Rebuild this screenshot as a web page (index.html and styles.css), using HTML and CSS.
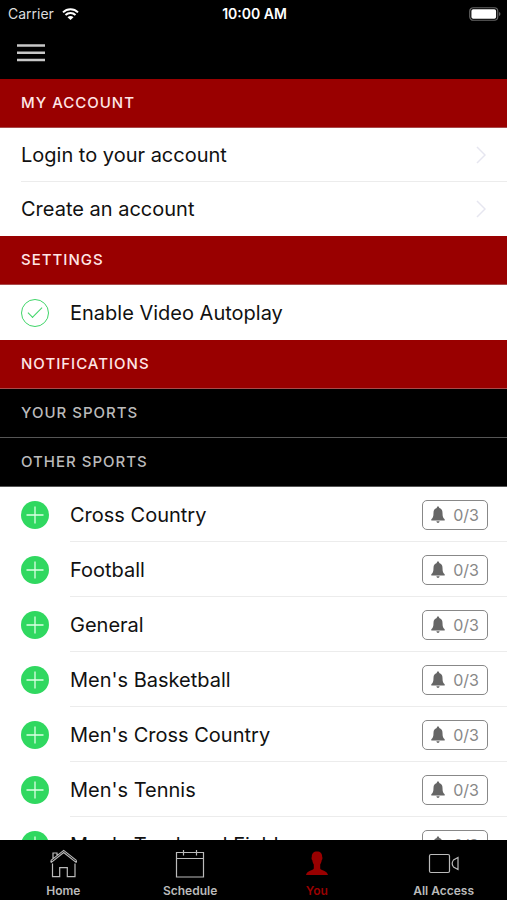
FILE: index.html
```html
<!DOCTYPE html>
<html lang="en">
<head>
    <meta charset="UTF-8">
    <meta name="viewport" content="width=device-width, initial-scale=1.0">
    <title>You</title>
    <link rel="stylesheet" href="styles.css">
</head>
<body>
    <!-- shared icons -->
    <svg class="sprite" aria-hidden="true">
        <symbol id="chevron" viewBox="0 0 10 18">
            <path d="M1 1l8 8-8 8" fill="none" stroke="currentColor" stroke-width="1.5"/>
        </symbol>
        <symbol id="plus" viewBox="0 0 28 28">
            <circle cx="14" cy="14" r="14" fill="#30d860"/>
            <path d="M14 5.5v17M5.5 14h17" stroke="#dcffe4" stroke-width="1.3"/>
        </symbol>
        <symbol id="bell" viewBox="0 0 14 18">
            <path d="M7 0.5C6.2 0.5 5.8 1 5.8 1.9C3.6 2.5 2.5 4.3 2.5 6.7C2.5 10.5 1.9 11.9 0.3 13.2V14.5H13.7V13.2C12.1 11.9 11.5 10.5 11.5 6.7C11.5 4.3 10.4 2.5 8.2 1.9C8.2 1 7.8 0.5 7 0.5ZM5.4 15.3C5.6 16.3 6.2 16.9 7 16.9C7.8 16.9 8.4 16.3 8.6 15.3Z" fill="currentColor"/>
        </symbol>
    </svg>

    <div class="app">
        <header class="header">
            <div class="status-bar">
                <div class="carrier">
                    <span>Carrier</span>
                    <svg class="wifi" viewBox="0 0 17 12">
                        <path d="M1 4.4C5.2 0.3 11.8 0.3 16 4.4M3.5 7C6.3 4.3 10.7 4.3 13.5 7" fill="none" stroke="#fff" stroke-width="2"/>
                        <path d="M5.5 9.2C7.2 7.6 9.8 7.6 11.5 9.2L8.5 12Z" fill="#fff"/>
                    </svg>
                </div>
                <div class="time">10:00 AM</div>
                <div class="battery">
                    <svg class="battery-icon" viewBox="0 0 32 14">
                        <rect x="0.75" y="0.75" width="28" height="12.5" rx="3.5" fill="none" stroke="#666" stroke-width="1.2"/>
                        <rect x="2.4" y="2.3" width="24.7" height="9.4" rx="1.8" fill="#fff"/>
                        <path d="M30.2 5c1.6 0.7 1.6 3.3 0 4z" fill="#777"/>
                    </svg>
                </div>
            </div>
            <button class="menu-btn" aria-label="Menu">
                <svg viewBox="0 0 30 20">
                    <path d="M1 2.5h28M1 9.7h28M1 17h28" stroke="#c8c8c8" stroke-width="2.4"/>
                </svg>
            </button>
        </header>

        <main class="content">
            <h2 class="section-title">MY ACCOUNT</h2>
            <nav class="account">
                <a class="link-row" href="#"><span>Login to your account</span><svg class="chevron"><use href="#chevron"/></svg></a>
                <a class="link-row" href="#"><span>Create an account</span><svg class="chevron"><use href="#chevron"/></svg></a>
            </nav>

            <h2 class="section-title">SETTINGS</h2>
            <div class="row">
                <input type="checkbox" class="check" id="autoplay" checked>
                <label class="row-body" for="autoplay">Enable Video Autoplay</label>
            </div>

            <h2 class="section-title">NOTIFICATIONS</h2>
            <h3 class="section-title dark">YOUR SPORTS</h3>
            <h3 class="section-title dark">OTHER SPORTS</h3>
            <ul class="sports">
                <li class="row">
                    <button class="add-btn" aria-label="Add Cross Country"><svg><use href="#plus"/></svg></button>
                    <div class="row-body"><span>Cross Country</span><button class="alert-btn"><svg><use href="#bell"/></svg>0/3</button></div>
                </li>
                <li class="row">
                    <button class="add-btn" aria-label="Add Football"><svg><use href="#plus"/></svg></button>
                    <div class="row-body"><span>Football</span><button class="alert-btn"><svg><use href="#bell"/></svg>0/3</button></div>
                </li>
                <li class="row">
                    <button class="add-btn" aria-label="Add General"><svg><use href="#plus"/></svg></button>
                    <div class="row-body"><span>General</span><button class="alert-btn"><svg><use href="#bell"/></svg>0/3</button></div>
                </li>
                <li class="row">
                    <button class="add-btn" aria-label="Add Men's Basketball"><svg><use href="#plus"/></svg></button>
                    <div class="row-body"><span>Men's Basketball</span><button class="alert-btn"><svg><use href="#bell"/></svg>0/3</button></div>
                </li>
                <li class="row">
                    <button class="add-btn" aria-label="Add Men's Cross Country"><svg><use href="#plus"/></svg></button>
                    <div class="row-body"><span>Men's Cross Country</span><button class="alert-btn"><svg><use href="#bell"/></svg>0/3</button></div>
                </li>
                <li class="row">
                    <button class="add-btn" aria-label="Add Men's Tennis"><svg><use href="#plus"/></svg></button>
                    <div class="row-body"><span>Men's Tennis</span><button class="alert-btn"><svg><use href="#bell"/></svg>0/3</button></div>
                </li>
                <li class="row">
                    <button class="add-btn" aria-label="Add Men's Track and Field"><svg><use href="#plus"/></svg></button>
                    <div class="row-body"><span>Men's Track and Field</span><button class="alert-btn"><svg><use href="#bell"/></svg>0/3</button></div>
                </li>
            </ul>
        </main>

        <nav class="tab-bar">
            <a class="tab" href="#">
                <svg viewBox="0 0 32 32">
                    <path d="M5.5 15.5V28.7H12.7V19.7H20.3V28.7H28V15.5M4 14.6L16.7 4.6L29.4 14.6M4 12.4L16.7 2.4L29.4 12.4M4 12.4v2.2M29.4 12.4v2.2M6 10.8V5H10V7.7"/>
                </svg>
                <span>Home</span>
            </a>
            <a class="tab" href="#">
                <svg viewBox="0 0 32 32">
                    <path d="M2.5 4.5H29.5V29H2.5ZM2.5 10.5H29.5M9.5 2V7.5M22.5 2V7.5"/>
                </svg>
                <span>Schedule</span>
            </a>
            <a class="tab active" href="#">
                <svg viewBox="0 0 32 32">
                    <path d="M16 3.5C12.5 3.5 10.7 5.5 10.8 9C10.4 9.4 10.4 11.5 11.3 12.2C11.6 14.3 12.2 15.6 12.8 16.5V20.5C12.2 22.6 6 22.4 5 27H27C26 22.4 19.8 22.6 19.2 20.5V16.5C19.8 15.6 20.4 14.3 20.7 12.2C21.6 11.5 21.6 9.4 21.2 9C21.3 5.5 19.5 3.5 16 3.5Z"/>
                </svg>
                <span>You</span>
            </a>
            <a class="tab" href="#">
                <svg viewBox="0 0 32 32">
                    <rect x="1.5" y="6.5" width="20" height="18" rx="1.5"/>
                    <path d="M30 9.5V21.5L25.5 19C24 17 24 14 25.5 12Z"/>
                </svg>
                <span>All Access</span>
            </a>
        </nav>
    </div>
</body>
</html>
```

FILE: styles.css
```css
* {
    margin: 0;
    padding: 0;
    box-sizing: border-box;
}

body {
    font-family: Inter, Roboto, Arial, sans-serif;
    background: #fff;
    color: #111;
}

button {
    font-family: inherit;
    background: none;
    border: none;
    cursor: pointer;
}

a {
    color: inherit;
    text-decoration: none;
}

svg {
    display: block;
}

.sprite {
    display: none;
}

.app {
    display: flex;
    flex-direction: column;
    height: 100vh;
}

/* header */
.header {
    flex: none;
    background: #000;
    color: #fff;
    padding-bottom: 16px;
}

.status-bar {
    display: flex;
    align-items: center;
    height: 27px;
    padding: 0 6px 0 8px;
    font-size: 14px;
}

.carrier,
.battery {
    flex: 1;
    display: flex;
    align-items: center;
}

.carrier {
    gap: 8px;
    color: #ddd;
}

.battery {
    justify-content: flex-end;
}

.wifi {
    width: 17px;
    height: 12px;
}

.time {
    font-weight: 600;
}

.battery-icon {
    width: 32px;
    height: 14px;
}

.menu-btn {
    display: block;
    margin-left: 16px;
    height: 36px;
    padding-top: 16px;
}

.menu-btn svg {
    width: 30px;
    height: 20px;
}

/* list */
.content {
    flex: 1;
    min-height: 0;
    overflow-y: auto;
    scrollbar-width: none;
}

.section-title {
    height: 49px;
    line-height: 48px;
    padding-left: 21px;
    background: #990000;
    border-bottom: 1px solid #a84a4a;
    color: #ffe6e6;
    font-size: 15px;
    font-weight: 500;
    letter-spacing: 1px;
}

.section-title.dark {
    background: #000;
    border-bottom-color: #555;
    color: #bbb;
}

.link-row {
    display: flex;
    align-items: center;
    justify-content: space-between;
    height: 54px;
    margin-left: 21px;
    padding-right: 21px;
    border-bottom: 1px solid #ececec;
    font-size: 20px;
}

.link-row:last-child {
    border-bottom: none;
}

.chevron {
    width: 10px;
    height: 18px;
    color: #e6e6f0;
}

.row {
    display: flex;
    align-items: center;
    gap: 21px;
    height: 55px;
    padding-left: 21px;
    font-size: 20px;
}

.row-body {
    flex: 1;
    display: flex;
    align-items: center;
    justify-content: space-between;
    height: 55px;
    padding-right: 19px;
}

.sports {
    list-style: none;
}

.sports .row-body {
    padding-top: 2px;
    border-bottom: 1px solid #ececec;
}

.check {
    appearance: none;
    display: flex;
    align-items: center;
    justify-content: center;
    width: 28px;
    height: 28px;
    border: 1px solid #3fd568;
    border-radius: 50%;
}

.check:checked::before {
    content: "";
    width: 13px;
    height: 6px;
    margin-bottom: 4px;
    border-left: 1px solid #3fd568;
    border-bottom: 1px solid #3fd568;
    transform: rotate(-45deg);
}

.add-btn,
.add-btn svg {
    width: 28px;
    height: 28px;
}

.alert-btn {
    display: flex;
    align-items: center;
    justify-content: center;
    gap: 8px;
    width: 66px;
    height: 30px;
    border: 1px solid #888;
    border-radius: 5px;
    color: #888;
    font-size: 16px;
}

.alert-btn svg {
    width: 14px;
    height: 18px;
    color: #666;
}

/* bottom tabs */
.tab-bar {
    flex: none;
    display: flex;
    height: 60px;
    background: #000;
}

.tab {
    flex: 1;
    display: flex;
    flex-direction: column;
    align-items: center;
    gap: 3px;
    padding-top: 8px;
    color: #bbb;
    font-size: 12px;
    font-weight: 600;
    line-height: 16px;
}

.tab svg {
    width: 32px;
    height: 32px;
    fill: none;
    stroke: currentColor;
    stroke-width: 1.2;
}

.tab.active {
    color: #990000;
}

.tab.active svg {
    fill: currentColor;
    stroke: none;
}
```
